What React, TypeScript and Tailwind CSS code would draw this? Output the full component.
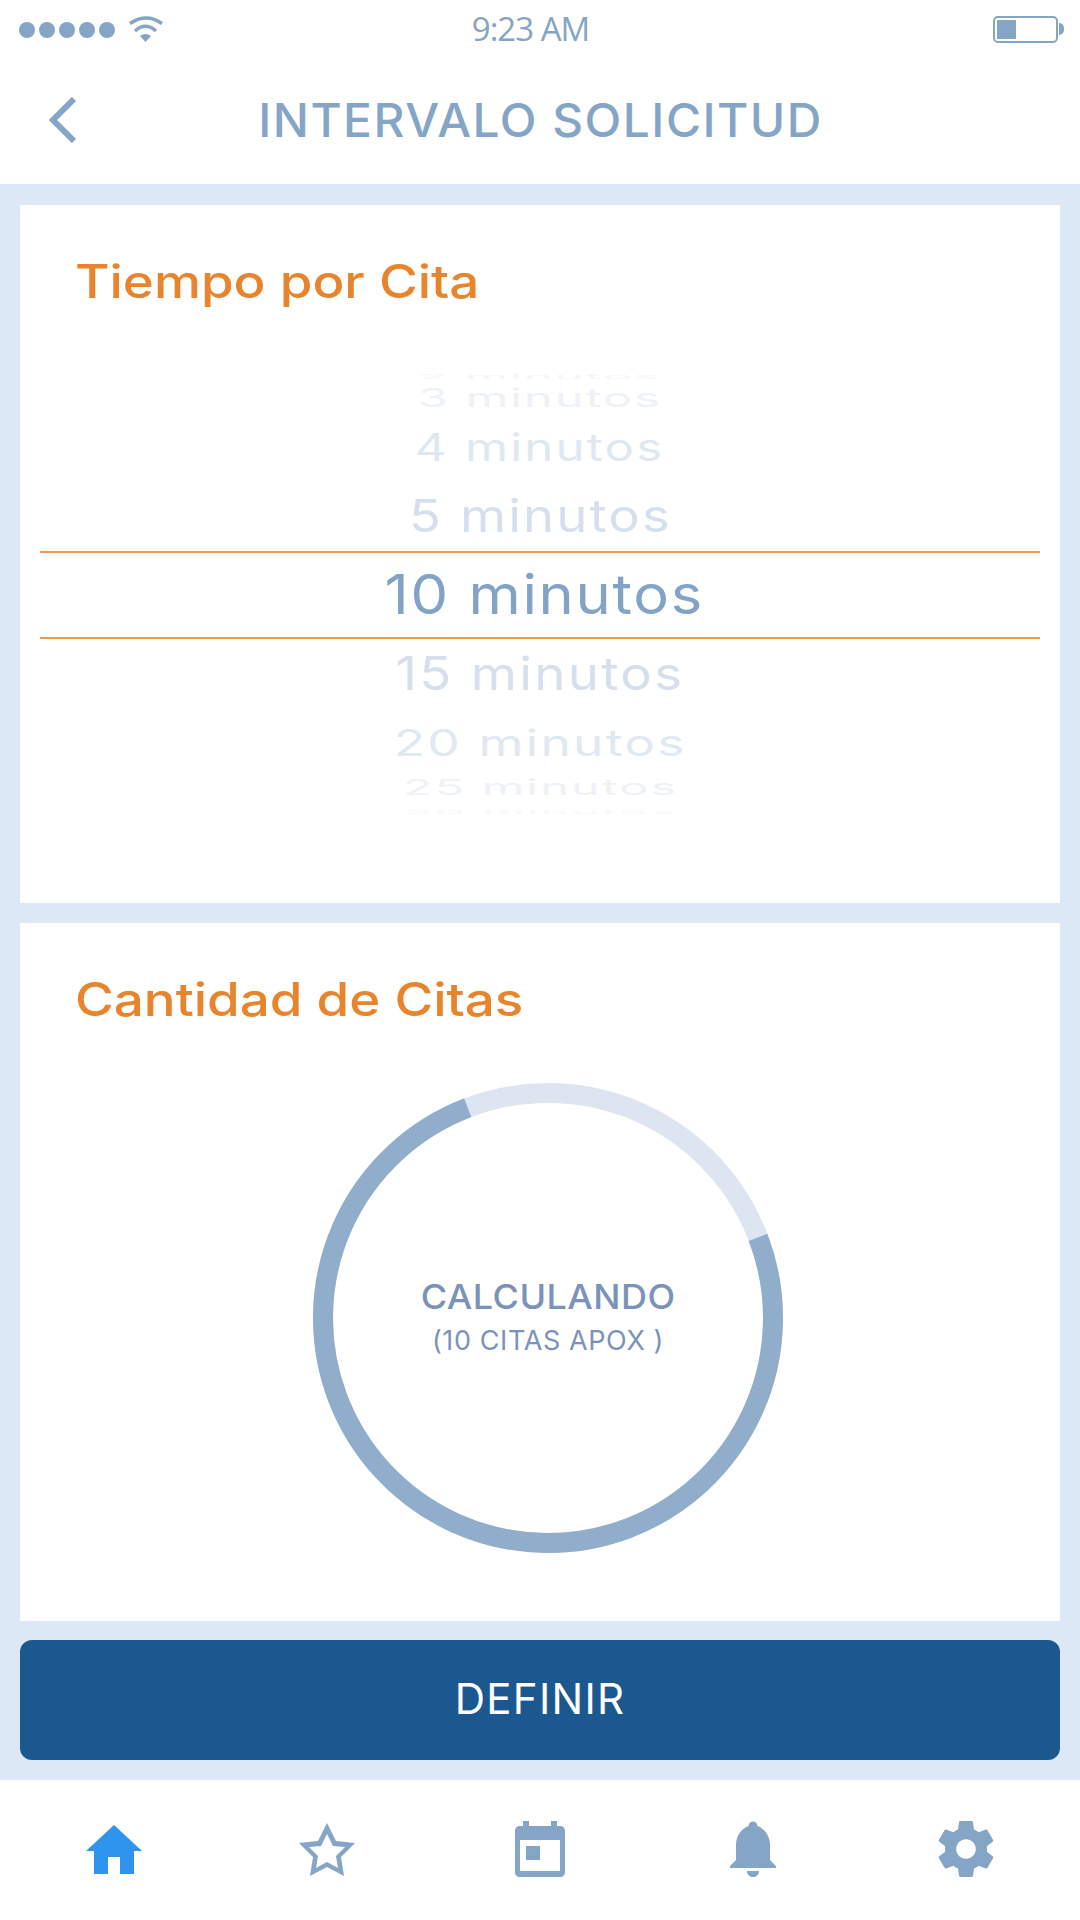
const pickerRows = [
  { label: "2 minutos", box: "h-[7px]", text: "text-[42px] tracking-[1.6px] scale-x-[1.165] scale-y-[0.14] text-[#f3f5f9]" },
  { label: "3 minutos", box: "h-[36px]", text: "text-[42px] tracking-[1.6px] scale-x-[1.165] scale-y-[0.6] text-[#eef2f7]" },
  { label: "4 minutos", box: "h-[62px]", text: "text-[42px] tracking-[1.9px] scale-x-[1.17] scale-y-[0.9] text-[#dfe8f1]" },
  { label: "5 minutos", box: "h-[73px] pt-[2px]", text: "text-[45px] tracking-[1.8px] scale-x-[1.17] text-[#d5e0ec]" },
  { label: "10 minutos", box: "h-[88px] border-y-2 border-[#ee9a4d]", text: "text-[55px] tracking-[1.6px] scale-x-[1.085] translate-x-[4px] -translate-y-[1px] text-[#82a3c6]" },
  { label: "15 minutos", box: "h-[67px]", text: "text-[46px] tracking-[2px] scale-x-[1.147] text-[#d5e0ec]" },
  { label: "20 minutos", box: "h-[71px]", text: "text-[46px] tracking-[2px] scale-x-[1.116] scale-y-[0.8] text-[#e0e8f1]" },
  { label: "25 minutos", box: "h-[20px]", text: "text-[44px] tracking-[1.8px] scale-x-[1.107] scale-y-[0.5] text-[#eef2f7]" },
  { label: "30 minutos", box: "h-[30px]", text: "text-[44px] tracking-[1.8px] scale-x-[1.1] scale-y-[0.12] text-[#f5f7fa]" },
];

function Wifi() {
  return (
    <svg width="34" height="26" viewBox="0 0 34 26" fill="none" stroke="#85a5c6" strokeWidth="3.5">
      <path d="M1 7.5Q17 -3.5 33 7.5" />
      <path d="M6 15Q16.5 5.5 27 15" />
      <path d="M11 20Q16.5 16 22 20L16.5 26Z" fill="#85a5c6" stroke="none" />
    </svg>
  );
}

function HomeIcon() {
  return (
    <svg width="56" height="49" viewBox="0 0 56 49" fill="#2f94ee">
      <path d="M28 0L56 26H48V49H34V32H22V49H8V26H0Z" />
    </svg>
  );
}

function StarIcon() {
  return (
    <svg width="56" height="53" viewBox="0 0 56 53" fill="#85a5c6">
      <path
        fillRule="evenodd"
        d="M28 0L37 18L56 20L42 34L45 53L28 44L11 53L14 34L0 20L19 18ZM28 11L22 23L10 24L19 33L17 45L28 39L39 45L37 33L46 24L34 23Z"
      />
    </svg>
  );
}

function CalendarIcon() {
  return (
    <svg width="50" height="56" viewBox="0 0 50 56" fill="#85a5c6">
      <path
        fillRule="evenodd"
        d="M8 0H14V5H36V0H42V5H45C48 5 50 7 50 10V51C50 54 48 56 45 56H5C2 56 0 54 0 51V10C0 7 2 5 5 5H8ZM5 19V50H45V19Z"
      />
      <rect x="11" y="25" width="14" height="14" />
    </svg>
  );
}

function BellIcon() {
  return (
    <svg width="46" height="56" viewBox="0 0 46 56" fill="#85a5c6">
      <path d="M18.5 5a4.5 4.5 0 0 1 9 0C35 8 40 15 40 24V39L46 45V47H0V45L6 39V24C6 15 11 8 18.5 5Z" />
      <path d="M17 50H29C29 54 26 56 23 56C20 56 17 54 17 50Z" />
    </svg>
  );
}

function GearIcon() {
  return (
    <svg width="56" height="56" viewBox="2 2 20 20" fill="#85a5c6">
      <path d="M19.43 12.98c.04-.32.07-.64.07-.98s-.03-.66-.07-.98l2.11-1.65c.19-.15.24-.42.12-.64l-2-3.46c-.12-.22-.39-.3-.61-.22l-2.49 1c-.52-.4-1.08-.73-1.69-.98l-.38-2.65C14.46 2.18 14.25 2 14 2h-4c-.25 0-.46.18-.49.42l-.38 2.65c-.61.25-1.17.59-1.69.98l-2.49-1c-.23-.09-.49 0-.61.22l-2 3.46c-.13.22-.07.49.12.64l2.11 1.65c-.04.32-.07.65-.07.98s.03.66.07.98l-2.11 1.65c-.19.15-.24.42-.12.64l2 3.46c.12.22.39.3.61.22l2.49-1c.52.4 1.08.73 1.69.98l.38 2.65c.03.24.24.42.49.42h4c.25 0 .46-.18.49-.42l.38-2.65c.61-.25 1.17-.59 1.69-.98l2.49 1c.23.09.49 0 .61-.22l2-3.46c.12-.22.07-.49-.12-.64l-2.11-1.65zM12 15.5c-1.93 0-3.5-1.57-3.5-3.5s1.57-3.5 3.5-3.5 3.5 1.57 3.5 3.5-1.57 3.5-3.5 3.5z" />
    </svg>
  );
}

export default function App() {
  return (
    <div className="flex h-[1920px] w-[1080px] flex-col bg-[#dde8f6] font-[Inter,sans-serif]">
      <div className="bg-white">
        {/* status bar */}
        <div className="grid h-[60px] grid-cols-[1fr_auto_1fr] items-center pl-[19px] pr-4">
          <div className="flex items-center">
            <div className="flex gap-1">
              <span className="size-4 rounded-full bg-[#85a5c6]" />
              <span className="size-4 rounded-full bg-[#85a5c6]" />
              <span className="size-4 rounded-full bg-[#85a5c6]" />
              <span className="size-4 rounded-full bg-[#85a5c6]" />
              <span className="size-4 rounded-full bg-[#85a5c6]" />
            </div>
            <div className="ml-[14px] -mt-[2px]">
              <Wifi />
            </div>
          </div>
          <span className="-mt-[3px] pr-[22px] font-['Open_Sans',sans-serif] text-[33px] leading-none tracking-[-1px] text-[#85a5c6]">
            9:23 AM
          </span>
          <div className="flex items-center justify-end">
            <div className="-mt-[2px] h-[27px] w-[65px] rounded-[5px] border-2 border-[#85a5c6] p-[2px]">
              <div className="h-full w-[19px] bg-[#85a5c6]" />
            </div>
            <span className="ml-[1px] -mt-[2px] h-[12px] w-[5px] rounded-r-full bg-[#85a5c6]" />
          </div>
        </div>
        {/* header */}
        <div className="grid h-[124px] grid-cols-[1fr_auto_1fr] items-center pb-[4px]">
          <svg className="ml-[47px]" width="30" height="46" viewBox="0 0 30 46" fill="none" stroke="#85a5c6" strokeWidth="6">
            <path d="M27 2L6 23L27 44" />
          </svg>
          <h1 className="scale-x-[1.04] text-[46px] leading-none font-medium tracking-[1.45px] text-[#85a5c6]">
            INTERVALO SOLICITUD
          </h1>
          <span />
        </div>
      </div>

      <main className="flex flex-1 flex-col px-5 pt-[21px]">
        <section className="h-[698px] bg-white px-5 pt-[46px]">
          <h2 className="h-[60px] w-fit origin-left translate-x-[35px] scale-x-[1.15] text-[46px] leading-[60px] font-[450] text-[#e8842c]">
            Tiempo por Cita
          </h2>
          <div className="mt-[62px]">
            {pickerRows.map((row) => (
              <div key={row.label} className={`flex items-center justify-center ${row.box}`}>
                <span className={`leading-none whitespace-nowrap ${row.text}`}>{row.label}</span>
              </div>
            ))}
          </div>
        </section>

        <section className="mt-5 flex h-[698px] flex-col bg-white px-5 pt-[46px]">
          <h2 className="h-[60px] w-fit origin-left translate-x-[35px] scale-x-[1.15] text-[46px] leading-[60px] font-[450] text-[#e8842c]">
            Cantidad de Citas
          </h2>
          <div className="relative mt-[54px] ml-4 size-[470px] self-center">
            <svg width="470" height="470" viewBox="0 0 470 470" fill="none" strokeWidth="20">
              <circle cx="235" cy="235" r="225" stroke="#dde6f0" />
              <circle
                cx="235"
                cy="235"
                r="225"
                stroke="#90aecb"
                strokeDasharray="1060.3 1413.7"
                transform="rotate(-21 235 235)"
              />
            </svg>
            <div className="absolute inset-0 flex flex-col items-center pt-[194px] text-[#7b93b8]">
              <span className="scale-x-[1.06] text-[34px] leading-[40px] font-[450] tracking-[0.4px]">CALCULANDO</span>
              <span className="mt-[4px] text-[27px] leading-[40px] tracking-[0.6px]">(10 CITAS APOX )</span>
            </div>
          </div>
        </section>

        <button className="mt-[19px] h-[120px] rounded-xl bg-[#1c5890] pb-[4px] text-[42px] tracking-[1.3px] text-white">
          DEFINIR
        </button>
      </main>

      <nav className="mt-5 grid h-[140px] grid-cols-5 items-center bg-white px-2 pb-[2px]">
        <div className="flex justify-center">
          <HomeIcon />
        </div>
        <div className="flex justify-center">
          <StarIcon />
        </div>
        <div className="flex justify-center">
          <CalendarIcon />
        </div>
        <div className="flex justify-center">
          <BellIcon />
        </div>
        <div className="flex justify-center">
          <GearIcon />
        </div>
      </nav>
    </div>
  );
}
